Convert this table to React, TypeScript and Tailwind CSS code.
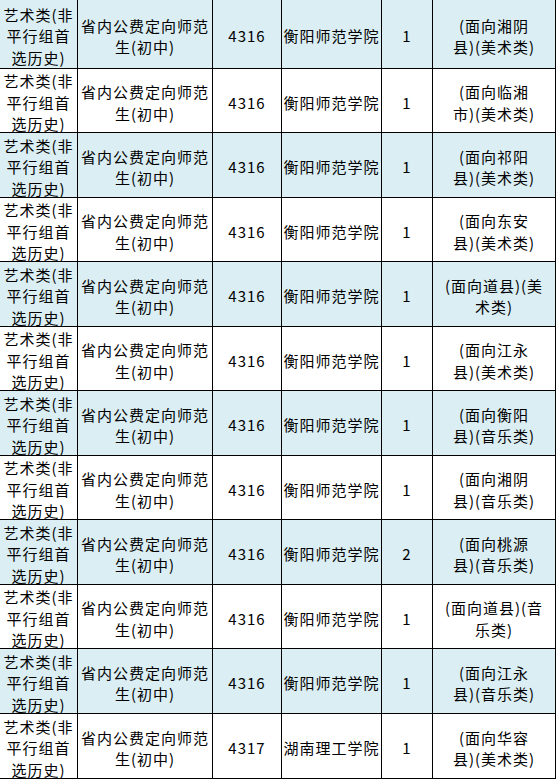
import React from "react";

type Row = {
  c1: string[];
  c2: string[];
  code: string;
  school: string;
  n: string;
  note: string[];
};

const c1 = ["艺术类(非", "平行组首", "选历史)"];
const c2 = ["省内公费定向师范", "生(初中)"];
const HY = "衡阳师范学院";

const rows: Row[] = [
  { c1, c2, code: "4316", school: HY, n: "1", note: ["(面向湘阴", "县)(美术类)"] },
  { c1, c2, code: "4316", school: HY, n: "1", note: ["(面向临湘", "市)(美术类)"] },
  { c1, c2, code: "4316", school: HY, n: "1", note: ["(面向祁阳", "县)(美术类)"] },
  { c1, c2, code: "4316", school: HY, n: "1", note: ["(面向东安", "县)(美术类)"] },
  { c1, c2, code: "4316", school: HY, n: "1", note: ["(面向道县)(美", "术类)"] },
  { c1, c2, code: "4316", school: HY, n: "1", note: ["(面向江永", "县)(美术类)"] },
  { c1, c2, code: "4316", school: HY, n: "1", note: ["(面向衡阳", "县)(音乐类)"] },
  { c1, c2, code: "4316", school: HY, n: "1", note: ["(面向湘阴", "县)(音乐类)"] },
  { c1, c2, code: "4316", school: HY, n: "2", note: ["(面向桃源", "县)(音乐类)"] },
  { c1, c2, code: "4316", school: HY, n: "1", note: ["(面向道县)(音", "乐类)"] },
  { c1, c2, code: "4316", school: HY, n: "1", note: ["(面向江永", "县)(音乐类)"] },
  { c1, c2, code: "4317", school: "湖南理工学院", n: "1", note: ["(面向华容", "县)(美术类)"] },
];

const heights = [
  "h-[69px]",
  "h-[64px]",
  "h-[65px]",
  "h-[64px]",
  "h-[65px]",
  "h-[64px]",
  "h-[65px]",
  "h-[64px]",
  "h-[65px]",
  "h-[64px]",
  "h-[65px]",
  "h-[65px]",
];

function Cell({ lines, w }: { lines: string[]; w: string }) {
  return (
    <div
      className={`${w} flex shrink-0 flex-col items-center justify-center border-r border-black pt-[4px] text-center`}
    >
      {lines.map((l, i) => (
        <div key={i} className="whitespace-nowrap">
          {l}
        </div>
      ))}
    </div>
  );
}

export default function App() {
  return (
    <div
      className="w-[560px] h-[783px] overflow-hidden bg-white text-[15px] leading-[21.5px] tracking-[1px] text-black"
      style={{ fontFamily: '"Noto Sans CJK SC", "Noto Sans", sans-serif' }}
    >
      <div className="flex w-[556px] flex-col">
        {rows.map((r, i) => (
          <div
            key={i}
            className={`flex ${heights[i]} border-b border-black ${
              i % 2 === 0 ? "bg-[#daeef3]" : "bg-white"
            }`}
          >
            <Cell lines={r.c1} w="w-[78px]" />
            <Cell lines={r.c2} w="w-[135px]" />
            <Cell lines={[r.code]} w="w-[69px]" />
            <Cell lines={[r.school]} w="w-[100px]" />
            <Cell lines={[r.n]} w="w-[51px]" />
            <Cell lines={r.note} w="w-[123px]" />
          </div>
        ))}
      </div>
    </div>
  );
}
